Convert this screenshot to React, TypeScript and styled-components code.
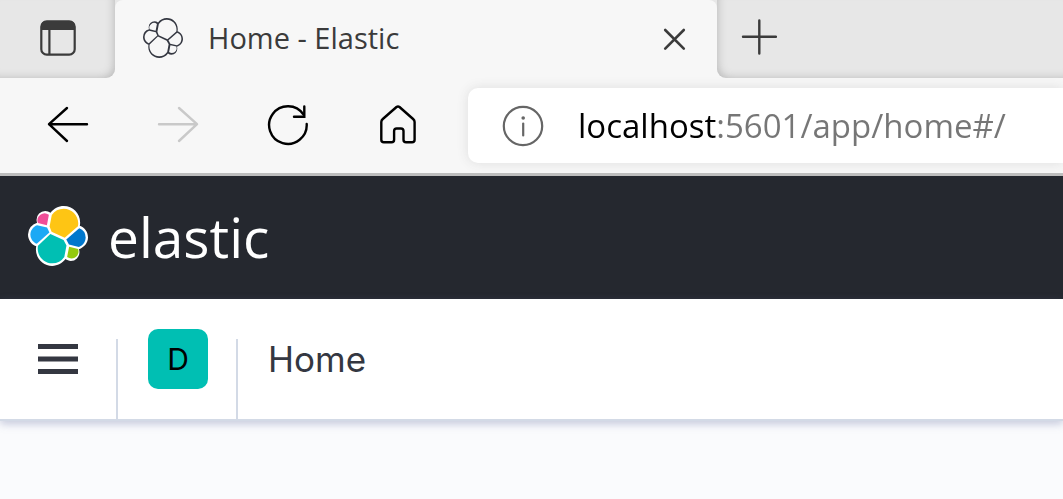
import React from "react";
import styled, { createGlobalStyle } from "styled-components";

const chrome = "#f7f7f7";
const strip = "#e7e7e7";
const ink = "#343741";
const rule = "#d3dae6";

const GlobalStyle = createGlobalStyle`
  *, *::before, *::after { box-sizing: border-box; }
  body {
    margin: 0;
    background: #fafbfd;
    font-family: Inter, "Liberation Sans", sans-serif;
    color: ${ink};
  }
  button { padding: 0; border: 0; background: none; color: inherit; font: inherit; cursor: pointer; }
  svg { display: block; }
`;

const TabStrip = styled.div`
  display: flex;
  height: 78px;
  background: linear-gradient(${strip} 30px, ${chrome} 30px);
  color: #3b3b3b;
`;

const StripSection = styled.div<{ $side: "left" | "right" }>`
  display: flex;
  align-items: center;
  padding-bottom: 2px;
  background: ${strip};
  ${({ $side }) =>
    $side === "left"
      ? `flex: none; width: 115px; justify-content: center;
         border-bottom-right-radius: 9px;
         box-shadow: inset -5px -4px 8px -4px #bbb;`
      : `flex: 1; padding-left: 24px;
         border-bottom-left-radius: 9px;
         box-shadow: inset 5px -4px 8px -4px #bbb;`}
`;

const Tab = styled.div`
  display: flex;
  align-items: center;
  flex: 0 1 602px;
  min-width: 0;
  padding: 0 28px 2px;
  gap: 25px;
  background: ${chrome};
  border-radius: 8px 8px 0 0;
`;

const TabTitle = styled.span`
  flex: 1;
  min-width: 0;
  overflow: hidden;
  white-space: nowrap;
  font: 400 29px/40px "Open Sans", "Noto Sans", sans-serif;
`;

const IconButton = styled.button`
  flex: none;
  display: flex;
  align-items: center;
  justify-content: center;

  &:disabled { color: #c9c9c9; cursor: default; }
`;

const Toolbar = styled.div`
  display: flex;
  align-items: center;
  height: 98px;
  padding: 0 0 0 46px;
  background: ${chrome};
  border-bottom: 3px solid #bdbdbd;
  color: #000;
`;

const NavButtons = styled.div`
  display: flex;
  flex: none;
  gap: 66px;
  margin-right: 48px;
  padding-bottom: 2px;
`;

const AddressBar = styled.label`
  display: flex;
  align-items: center;
  flex: 1;
  min-width: 0;
  height: 75px;
  padding-left: 34px;
  gap: 34px;
  background: #fff;
  border-radius: 10px 0 0 10px;
  box-shadow: 0 0 12px #dedede;
  color: #666;
`;

const AddressInput = styled.input`
  flex: 1;
  min-width: 0;
  height: 50px;
  padding: 0;
  border: 0;
  outline: 0;
  font: 400 33px/50px "Open Sans", "Noto Sans", sans-serif;
  color: transparent;
  caret-color: #000;
  background: linear-gradient(90deg, #000 138px, #767676 138px);
  background-clip: text;
`;

const BrandBar = styled.header`
  display: flex;
  align-items: center;
  height: 123px;
  padding: 0 28px 4px;
  background: #25282f;
`;

const BrandLink = styled.a`
  display: flex;
  align-items: center;
  gap: 20px;
  color: #fff;
  text-decoration: none;
  font: 400 55px/60px "Open Sans", "Noto Sans", sans-serif;
`;

const BrandName = styled.span`
  padding-top: 2px;
`;

const NavBar = styled.nav`
  position: relative;
  z-index: 1;
  display: flex;
  align-items: flex-end;
  height: 122px;
  background: #fff;
  border-bottom: 2px solid ${rule};
  box-shadow: 0 3px 8px rgba(100, 110, 160, 0.35);
`;

const Content = styled.main`
  min-height: 78px;
  background: #fafbfd;
`;

const NavCell = styled.div<{ $width: number }>`
  display: flex;
  justify-content: center;
  flex: none;
  width: ${({ $width }) => $width}px;
  height: 80px;
  padding-left: 2px;
  border-right: 2px solid ${rule};
`;

const MenuButton = styled(IconButton)`
  width: 40px;
  height: 40px;
  margin-right: 2px;
`;

const SpaceButton = styled.button`
  width: 60px;
  height: 60px;
  margin-top: -10px;
  border-radius: 10px;
  background: #00bfb3;
  color: #000;
  font-size: 30px;
  font-weight: 400;
  line-height: 60px;
`;

const Breadcrumb = styled.h1`
  margin: 0;
  padding-left: 30px;
  height: 80px;
  font-size: 35px;
  font-weight: 400;
  line-height: 40px;
`;

const blobs = {
  yellow: "M12.58 13.787l7.002 3.211 7.066-6.213a7.849 7.849 0 00.152-1.557c0-4.287-3.465-7.77-7.73-7.77A7.754 7.754 0 0012.69 4.863l-1.176 6.121z",
  teal: "M5.333 21.214A7.976 7.976 0 005.18 22.79c0 4.299 3.486 7.797 7.77 7.797a7.77 7.77 0 006.406-3.388l1.166-6.102-1.556-2.988-7.03-3.216z",
  pink: "M5.288 9.067l4.8 1.137 1.05-5.479a3.8 3.8 0 00-5.85 4.342z",
  blue: "M4.872 10.214c-2.145.713-3.603 2.768-3.603 5.037 0 2.204 1.36 4.172 3.41 4.948l6.735-6.111-1.237-2.653z",
  green: "M20.874 27.187a3.757 3.757 0 002.282.785 3.79 3.79 0 003.569-5.09l-4.8-1.127z",
  navy: "M21.848 20.563l5.28 1.238c2.147-.713 3.606-2.768 3.606-5.037a5.303 5.303 0 00-3.417-4.947l-6.907 6.077z",
};

const blobColors: Record<keyof typeof blobs, string> = {
  yellow: "#fec514",
  teal: "#00bfb3",
  pink: "#f04e98",
  blue: "#1ba9f5",
  green: "#93c90e",
  navy: "#0077cc",
};

const MarkSvg = styled.svg`
  flex: none;
`;

function ElasticMark({ size, line, fill }: { size: number; line: string; fill?: string }) {
  return (
    <MarkSvg width={size} height={size} viewBox="0 0 32 32" aria-hidden="true">
      <path
        fill={line}
        d="M32 16.77c0-2.81-1.745-5.257-4.366-6.214.116-.598.174-1.201.174-1.818C27.808 3.925 23.892.01 19.083.01c-2.817 0-5.426 1.342-7.07 3.627a4.62 4.62 0 00-2.827-.963 4.637 4.637 0 00-4.635 4.635c0 .554.104 1.1.288 1.603A6.66 6.66 0 000 15.195c0 2.84 1.763 5.303 4.394 6.263a9.073 9.073 0 00-.172 1.794c0 4.808 3.906 8.712 8.705 8.712 2.817 0 5.426-1.361 7.06-3.64.8.628 1.795.98 2.82.98a4.637 4.637 0 004.634-4.635c0-.554-.104-1.1-.287-1.602C29.99 22.006 32 19.574 32 16.77"
      />
      {(Object.keys(blobs) as (keyof typeof blobs)[]).map((name) => (
        <path key={name} d={blobs[name]} fill={fill ?? blobColors[name]} />
      ))}
    </MarkSvg>
  );
}

const lineProps = {
  fill: "none",
  stroke: "currentColor",
  strokeLinecap: "round" as const,
  strokeLinejoin: "round" as const,
};

export default function App() {
  return (
    <>
      <GlobalStyle />
      <TabStrip>
        <StripSection $side="left">
          <IconButton aria-label="Tab actions">
            <svg width="36" height="36" viewBox="0 0 36 36" {...lineProps} strokeWidth="2.2">
              <rect x="1.3" y="1.3" width="33.4" height="33.4" rx="5.5" />
              <path d="M1 10V6.5Q1 1 6.5 1h23Q35 1 35 6.5V10z" fill="currentColor" stroke="none" />
              <path d="M9.4 10v24" />
            </svg>
          </IconButton>
        </StripSection>
        <Tab>
          <ElasticMark size={40} line="#343741" fill={chrome} />
          <TabTitle>Home - Elastic</TabTitle>
          <IconButton aria-label="Close tab">
            <svg width="28" height="28" viewBox="0 0 28 28" {...lineProps} strokeWidth="2.6">
              <path d="M4.2 6L22.8 24.6M22.8 6L4.2 24.6" />
            </svg>
          </IconButton>
        </Tab>
        <StripSection $side="right">
          <IconButton aria-label="New tab">
            <svg width="36" height="38" viewBox="0 0 36 38" {...lineProps} strokeWidth="2.4">
              <path d="M18.3 1.500v33M2 17.800h33" />
            </svg>
          </IconButton>
        </StripSection>
      </TabStrip>

      <Toolbar>
        <NavButtons>
          <IconButton aria-label="Back">
            <svg width="44" height="44" viewBox="0 0 44 44" {...lineProps} strokeWidth="2.4">
              <path d="M41 21.200H3M21 5L3 21.200 21 38" />
            </svg>
          </IconButton>
          <IconButton aria-label="Forward" disabled>
            <svg width="44" height="44" viewBox="0 0 44 44" {...lineProps} strokeWidth="2.4">
              <path d="M3 21.200h38M23 5l18 16.200L23 38" />
            </svg>
          </IconButton>
          <IconButton aria-label="Refresh">
            <svg width="44" height="44" viewBox="0 0 44 44" {...lineProps} strokeWidth="2.4" strokeLinejoin="miter">
              <path d="M40.700 21A18.800 18.800 0 1 1 37.500 11.500" />
              <path d="M38.300 3.500v10.300H28" />
            </svg>
          </IconButton>
          <IconButton aria-label="Home page">
            <svg width="44" height="44" viewBox="0 0 44 44" {...lineProps} strokeWidth="2.4">
              <path d="M20.500 4a2.400 2.400 0 0 1 3 0l13.600 12q1.500 1.300 1.500 3V36.700q0 2.600-2.600 2.600h-5.900q-2.600 0-2.600-2.600V28.100q0-2.600-2.600-2.600h-4.200q-2.600 0-2.600 2.600V36.700q0 2.600-2.600 2.600H7.900q-2.600 0-2.600-2.600V19q0-1.700 1.500-3z" />
            </svg>
          </IconButton>
        </NavButtons>
        <AddressBar>
          <svg width="42" height="42" viewBox="0 0 42 42" {...lineProps} strokeWidth="2.200" aria-hidden="true">
            <circle cx="21" cy="21" r="19.200" />
            <path d="M21.200 18.500v12" />
            <circle cx="21.200" cy="13" r="1.800" fill="currentColor" stroke="none" />
          </svg>
          <AddressInput type="text" aria-label="Address" defaultValue="localhost:5601/app/home#/" spellCheck={false} />
        </AddressBar>
      </Toolbar>

      <BrandBar>
        <BrandLink href="#/">
          <ElasticMark size={60} line="#fff" />
          <BrandName>elastic</BrandName>
        </BrandLink>
      </BrandBar>

      <NavBar>
        <NavCell $width={118}>
          <MenuButton aria-label="Toggle navigation">
            <svg width="40" height="30" viewBox="0 0 40 30" fill="currentColor">
              <path d="M0 0h40v5H0zM0 12.500h40v5H0zM0 25h40v5H0z" />
            </svg>
          </MenuButton>
        </NavCell>
        <NavCell $width={120}>
          <SpaceButton aria-label="Default space">D</SpaceButton>
        </NavCell>
        <Breadcrumb>Home</Breadcrumb>
      </NavBar>
      <Content />
    </>
  );
}
